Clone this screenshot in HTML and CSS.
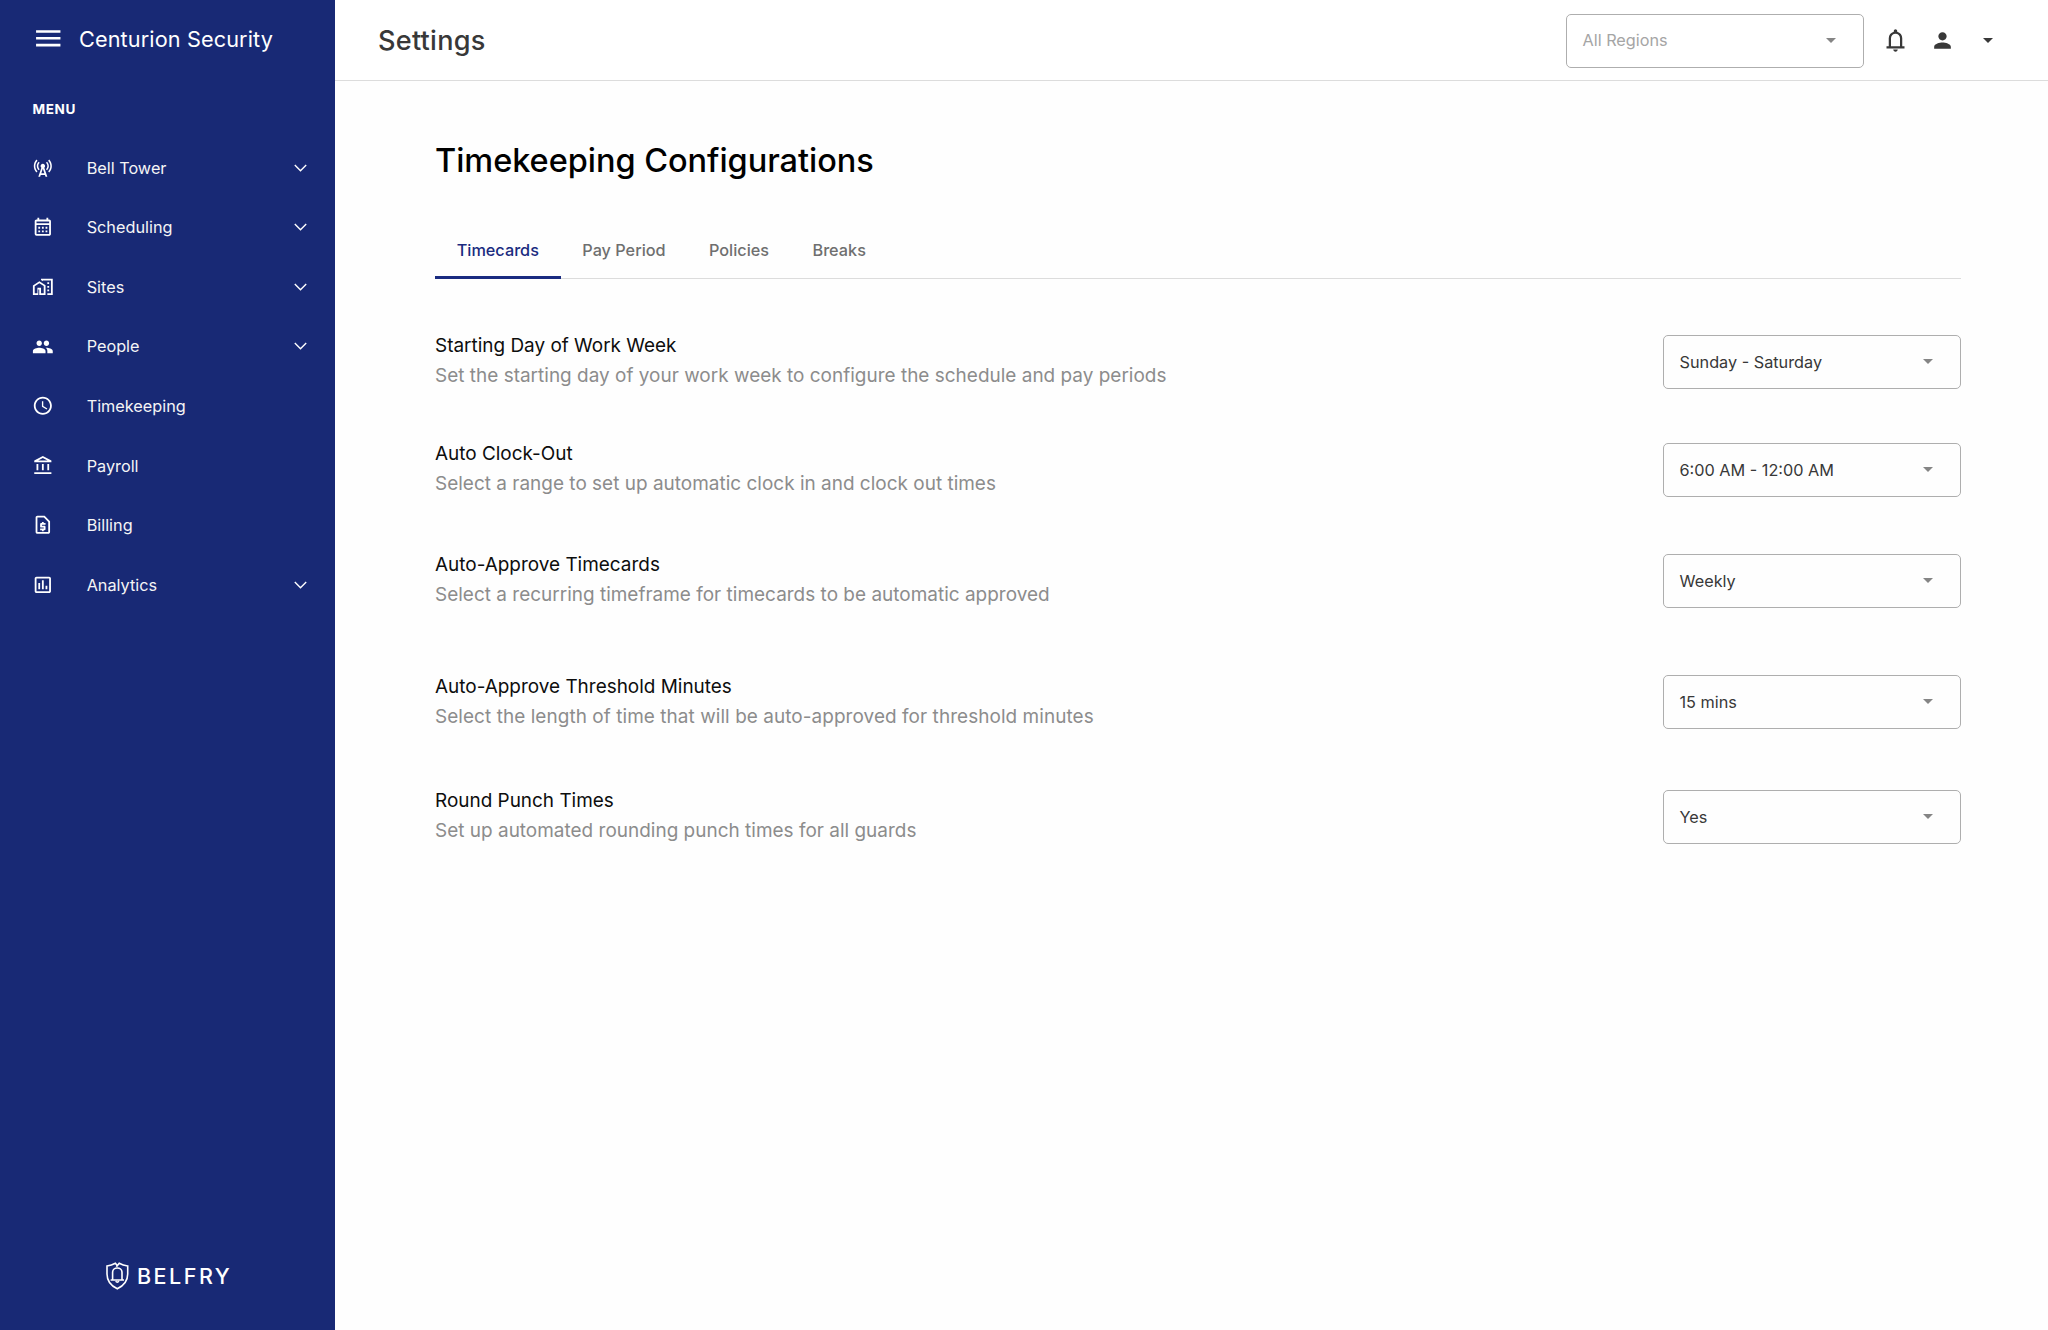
FILE: index.html
```
<!DOCTYPE html>
<html lang="en">
<head>
  <meta charset="UTF-8" />
  <meta name="viewport" content="width=device-width, initial-scale=1.0"/>
  <title>Settings - Timekeeping Configurations</title>
  <link rel="stylesheet" href="styles.css">
</head>
<body>

  <aside class="sidebar">
    <div class="brand">
      <svg class="burger" viewBox="0 0 24 24"><path d="M3 18h18v-2H3v2zm0-5h18v-2H3v2zm0-7v2h18V6H3z"/></svg>
      <span>Centurion Security</span>
    </div>
    <div class="menu-title">MENU</div>
    <nav class="menu">
      <a class="item">
        <svg class="icon" viewBox="0 0 24 24"><path d="M7.3 14.7l1.2-1.2c-1-1-1.5-2.3-1.5-3.5 0-1.3.5-2.6 1.5-3.5L7.3 5.3c-1.3 1.3-2 3-2 4.7s.7 3.4 2 4.7zM19.1 2.9l-1.2 1.2c1.6 1.6 2.4 3.8 2.4 5.9 0 2.1-.8 4.3-2.4 5.9l1.2 1.2c2-2 2.9-4.5 2.9-7.1 0-2.6-1-5.1-2.9-7.1zM6.1 4.1L4.9 2.9C3 4.9 2 7.4 2 10c0 2.6 1 5.1 2.9 7.1l1.2-1.2c-1.6-1.6-2.4-3.8-2.4-5.9 0-2.1.8-4.3 2.4-5.9zM16.7 14.7c1.3-1.3 2-3 2-4.7-.1-1.7-.7-3.4-2-4.7l-1.2 1.2c1 1 1.5 2.3 1.5 3.5 0 1.3-.5 2.6-1.5 3.5l1.2 1.2zM14.5 10c0-1.38-1.12-2.5-2.5-2.5S9.5 8.62 9.5 10c0 .76.34 1.42.87 1.88L7 22h2l.67-2h4.67l.66 2h2l-3.37-10.12c.53-.46.87-1.12.87-1.88zm-4.17 8L12 13l1.67 5h-3.34z"/></svg>
        <span>Bell Tower</span>
        <svg class="chevron" viewBox="0 0 13 8"><path d="M.8 1l5.7 5.7L12.2 1"/></svg>
      </a>
      <a class="item">
        <svg class="icon" viewBox="0 0 24 24"><path d="M19 4h-1V2h-2v2H8V2H6v2H5c-1.11 0-1.99.9-1.99 2L3 20a2 2 0 0 0 2 2h14c1.1 0 2-.9 2-2V6c0-1.1-.9-2-2-2zm0 16H5V10h14v10zm0-12H5V6h14v2zM9 14H7v-2h2v2zm4 0h-2v-2h2v2zm4 0h-2v-2h2v2zm-8 4H7v-2h2v2zm4 0h-2v-2h2v2zm4 0h-2v-2h2v2z"/></svg>
        <span>Scheduling</span>
        <svg class="chevron" viewBox="0 0 13 8"><path d="M.8 1l5.7 5.7L12.2 1"/></svg>
      </a>
      <a class="item">
        <svg class="icon" viewBox="0 0 24 24"><path d="M17 15h2v2h-2zM17 11h2v2h-2zM17 7h2v2h-2zM10 3v1.51l2 1.33V5h9v14h-4v2h6V3zM8.17 5.7L15 10.25V21h-7v-6h-1v6H1V10.48zM10 19h3v-7.84L8.17 8.09 3 11.38V19h3v-6h4z"/></svg>
        <span>Sites</span>
        <svg class="chevron" viewBox="0 0 13 8"><path d="M.8 1l5.7 5.7L12.2 1"/></svg>
      </a>
      <a class="item">
        <svg class="icon" viewBox="0 0 24 24"><path d="M16 11c1.66 0 2.99-1.34 2.99-3S17.66 5 16 5c-1.66 0-3 1.34-3 3s1.34 3 3 3zm-8 0c1.66 0 2.99-1.34 2.99-3S9.66 5 8 5C6.34 5 5 6.34 5 8s1.34 3 3 3zm0 2c-2.33 0-7 1.17-7 3.5V19h14v-2.5c0-2.33-4.67-3.5-7-3.5zm8 0c-.29 0-.62.02-.97.05 1.16.84 1.97 1.97 1.97 3.45V19h6v-2.5c0-2.33-4.67-3.5-7-3.5z"/></svg>
        <span>People</span>
        <svg class="chevron" viewBox="0 0 13 8"><path d="M.8 1l5.7 5.7L12.2 1"/></svg>
      </a>
      <a class="item">
        <svg class="icon" viewBox="0 0 24 24"><path d="M11.99 2C6.47 2 2 6.48 2 12s4.47 10 9.99 10C17.52 22 22 17.52 22 12S17.52 2 11.99 2zM12 20c-4.42 0-8-3.58-8-8s3.58-8 8-8 8 3.58 8 8-3.58 8-8 8zm.5-13H11v6l5.25 3.15.75-1.23-4.5-2.67z"/></svg>
        <span>Timekeeping</span>
      </a>
      <a class="item">
        <svg class="icon" viewBox="0 0 24 24"><path d="M7 10H5v7h2v-7zm6 0h-2v7h2v-7zm8.5 9h-19v2h19v-2zM19 10h-2v7h2v-7zm-7-6.740L17.210 6H6.790L12 3.260M12 1L2.500 6v2h19V6L12 1z"/></svg>
        <span>Payroll</span>
      </a>
      <a class="item">
        <svg class="icon" viewBox="0 0 24 24"><path d="M14 2H6c-1.1 0-1.99.9-1.99 2L4 20c0 1.1.89 2 1.99 2H18c1.1 0 2-.9 2-2V8l-6-6zM6 20V4h7.17L18 8.83V20H6zm5-1h2v-1h1c.55 0 1-.45 1-1v-3c0-.55-.45-1-1-1h-3v-1h4v-2h-2V9h-2v1h-1c-.55 0-1 .45-1 1v3c0 .55.45 1 1 1h3v1H9v2h2v1z" fill-rule="evenodd"/></svg>
        <span>Billing</span>
      </a>
      <a class="item">
        <svg class="icon" viewBox="0 0 24 24"><path d="M9 17H7v-7h2v7zm4 0h-2V7h2v10zm4 0h-2v-4h2v4zm2 2H5V5h14v14zm0-16H5c-1.1 0-2 .9-2 2v14c0 1.1.9 2 2 2h14c1.1 0 2-.9 2-2V5c0-1.1-.9-2-2-2z"/></svg>
        <span>Analytics</span>
        <svg class="chevron" viewBox="0 0 13 8"><path d="M.8 1l5.7 5.7L12.2 1"/></svg>
      </a>
    </nav>
    <div class="logo">
      <svg class="shield" viewBox="0 0 23 28">
        <path d="M11.8 4.200L9.400 1.200Q5.500 3.400 1 4v8c0 7 4 11.800 10.300 14.800C17.500 23.800 21.700 19 21.700 12V4Q17 3.400 13.200 1.200L10.400 4.800"/>
        <path d="M4.600 18h13.400M6.600 17.500V10.500c0-6 9.400-6 9.400 0v7M9.600 19.200q1.700 1.800 3.400 0"/>
      </svg>
      <span>BELFRY</span>
    </div>
  </aside>

  <div class="page">
    <header class="topbar">
      <h1>Settings</h1>
      <div class="select muted">
        <span>All Regions</span>
        <svg class="caret" viewBox="0 0 10 5"><path d="M0 0h10L5 5z"/></svg>
      </div>
      <svg class="bell" viewBox="0 0 24 24"><path d="M4 19v-2h2v-7q0-2.075 1.250-3.687T10.500 4.200v-.7q0-.625.438-1.062T12 2t1.063.438T13.500 3.500v.7q2 .5 3.250 2.113T18 10v7h2v2zm8 3q-.825 0-1.412-.587T10 20h4q0 .825-.587 1.413T12 22M8 17h8v-7q0-1.650-1.175-2.825T12 6T9.175 7.175T8 10z"/></svg>
      <svg class="user" viewBox="0 0 24 24"><path d="M12 12c2.210 0 4-1.790 4-4s-1.790-4-4-4-4 1.790-4 4 1.790 4 4 4zm0 2c-2.670 0-8 1.340-8 4v2h16v-2c0-2.660-5.330-4-8-4z"/></svg>
      <svg class="caret" viewBox="0 0 10 5"><path d="M0 0h10L5 5z"/></svg>
    </header>

    <main class="content">
      <h2>Timekeeping Configurations</h2>

      <div class="tabs">
        <div class="tab active">Timecards</div>
        <div class="tab">Pay Period</div>
        <div class="tab">Policies</div>
        <div class="tab">Breaks</div>
      </div>

      <div class="row week">
        <div class="text">
          <div class="label">Starting Day of Work Week</div>
          <div class="desc">Set the starting day of your work week to configure the schedule and pay periods</div>
        </div>
        <div class="select">
          <span>Sunday - Saturday</span>
          <svg class="caret" viewBox="0 0 10 5"><path d="M0 0h10L5 5z"/></svg>
        </div>
      </div>

      <div class="row clock-out">
        <div class="text">
          <div class="label">Auto Clock-Out</div>
          <div class="desc">Select a range to set up automatic clock in and clock out times</div>
        </div>
        <div class="select">
          <span>6:00 AM - 12:00 AM</span>
          <svg class="caret" viewBox="0 0 10 5"><path d="M0 0h10L5 5z"/></svg>
        </div>
      </div>

      <div class="row approve">
        <div class="text">
          <div class="label">Auto-Approve Timecards</div>
          <div class="desc">Select a recurring timeframe for timecards to be automatic approved</div>
        </div>
        <div class="select">
          <span>Weekly</span>
          <svg class="caret" viewBox="0 0 10 5"><path d="M0 0h10L5 5z"/></svg>
        </div>
      </div>

      <div class="row threshold">
        <div class="text">
          <div class="label">Auto-Approve Threshold Minutes</div>
          <div class="desc">Select the length of time that will be auto-approved for threshold minutes</div>
        </div>
        <div class="select">
          <span>15 mins</span>
          <svg class="caret" viewBox="0 0 10 5"><path d="M0 0h10L5 5z"/></svg>
        </div>
      </div>

      <div class="row">
        <div class="text">
          <div class="label">Round Punch Times</div>
          <div class="desc">Set up automated rounding punch times for all guards</div>
        </div>
        <div class="select">
          <span>Yes</span>
          <svg class="caret" viewBox="0 0 10 5"><path d="M0 0h10L5 5z"/></svg>
        </div>
      </div>
    </main>
  </div>

</body>
</html>
```
FILE: styles.css
```
* {
  box-sizing: border-box;
}
body {
  margin: 0;
  display: flex;
  min-height: 100vh;
  font-family: Inter, sans-serif;
  font-size: 16.25px;
  background: #fefefe;
  color: #383838;
}
svg {
  display: block;
  flex-shrink: 0;
  fill: currentColor;
}

/* sidebar */
.sidebar {
  width: 334.5px;
  flex-shrink: 0;
  display: flex;
  flex-direction: column;
  background: #182975;
  color: #fff;
}
.brand {
  display: flex;
  align-items: center;
  gap: 14.5px;
  height: 78px;
  padding-left: 32px;
  font-size: 21.67px;
  letter-spacing: 0.12px;
}
.burger {
  width: 32.5px;
  height: 32.5px;
  margin-top: -2px;
}
.menu-title {
  height: 60px;
  line-height: 62px;
  padding-left: 32.5px;
  font-size: 13.54px;
  font-weight: 700;
  letter-spacing: 0.6px;
}
.item {
  display: flex;
  align-items: center;
  height: 59.55px;
  padding: 0 28px 0 32px;
  color: #f5f5f5;
}
.item span {
  flex: 1;
  margin-left: 33px;
}
.icon {
  width: 21.67px;
  height: 21.67px;
  color: #fff;
}
.chevron {
  width: 13px;
  height: 8px;
  fill: none;
  stroke: #fff;
  stroke-width: 1.4;
}
.logo {
  display: flex;
  align-items: center;
  gap: 8.5px;
  margin-top: auto;
  height: 109px;
  padding-left: 105.5px;
  font-size: 21.5px;
  font-weight: 500;
  letter-spacing: 2.5px;
}
.shield {
  width: 23px;
  height: 28px;
  fill: none;
  stroke: #fff;
  stroke-width: 1.6;
}

/* top bar */
.page {
  flex: 1;
}
.topbar {
  display: flex;
  align-items: center;
  height: 81px;
  padding: 0 55px 0 43.5px;
  background: #fff;
  border-bottom: 1px solid #dcdcdc;
}
.topbar h1 {
  flex: 1;
  margin: 1px 0 0;
  font-size: 27.08px;
  font-weight: 500;
  letter-spacing: 0.25px;
}
.topbar .select {
  margin-top: 1px;
}
.bell {
  width: 27px;
  height: 27px;
  margin-left: 18px;
}
.user {
  width: 25px;
  height: 25px;
  margin: 1px 28px 0 21px;
}

/* selects */
.select {
  display: flex;
  align-items: center;
  justify-content: space-between;
  width: 298px;
  height: 54px;
  padding: 0 27.5px 1px 15.5px;
  border: 1px solid #aeaeae;
  border-radius: 5px;
}
.select .caret {
  color: #858585;
}
.muted {
  color: #a5a5a5;
}
.caret {
  width: 10px;
  height: 5px;
}

/* content */
.content {
  padding: 58px 87px 0 100.5px;
}
.content h2 {
  margin: 0 0 39px;
  line-height: 44px;
  font-size: 32.5px;
  font-weight: 500;
  letter-spacing: -0.04px;
  color: #000;
}
.tabs {
  display: flex;
  height: 57px;
  margin-bottom: 52px;
  border-bottom: 1px solid #dcdcdc;
}
.tab {
  height: 57px;
  line-height: 57px;
  padding: 0 21.7px;
  font-weight: 500;
  color: #6f6f6f;
}
.tab.active {
  color: #1a2b80;
  border-bottom: 3px solid #1a2b80;
}
.row {
  display: flex;
  justify-content: space-between;
  height: 60px;
  font-size: 18.96px;
  line-height: 30px;
}
.row .select {
  margin-top: 4px;
  font-size: 16.25px;
}
.week {
  margin-bottom: 48px;
}
.clock-out {
  margin-bottom: 51px;
}
.approve {
  margin-bottom: 62px;
}
.threshold {
  margin-bottom: 54px;
}
.threshold .select {
  margin-top: 3px;
}
.label {
  color: #0d0d0d;
}
.desc {
  letter-spacing: 0.02px;
  color: #8c8c8c;
}
.threshold .desc {
  letter-spacing: 0.07px;
}
```
